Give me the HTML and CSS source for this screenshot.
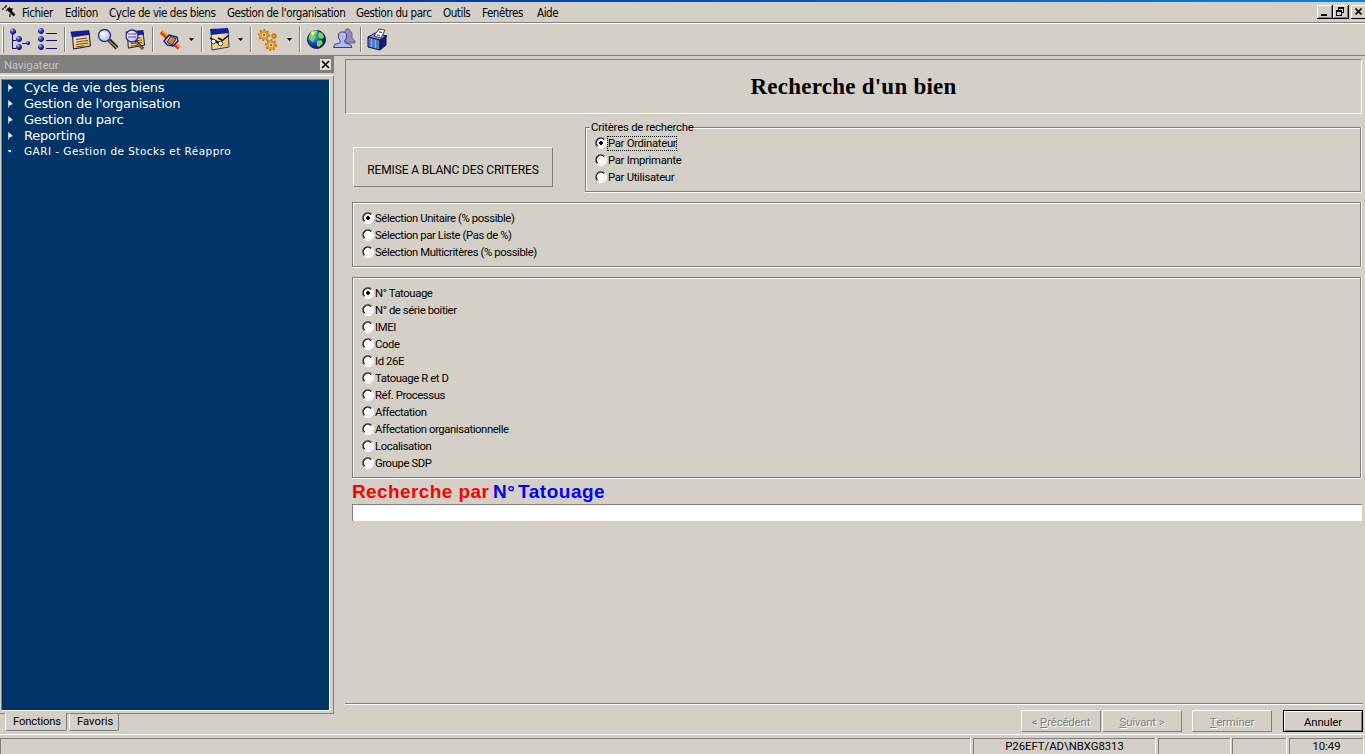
FILE: index.html
```html
<!DOCTYPE html>
<html lang="fr">
<head>
<meta charset="utf-8">
<title>Recherche d'un bien</title>
<link rel="stylesheet" href="styles.css">
</head>
<body>
<svg class="defs" width="0" height="0">
  <defs>
    <radialGradient id="ball" cx="35%" cy="30%" r="75%"><stop offset="0" stop-color="#c8d0ff"/><stop offset=".35" stop-color="#4850c8"/><stop offset="1" stop-color="#000070"/></radialGradient>
    <radialGradient id="sea" cx="35%" cy="35%" r="70%"><stop offset="0" stop-color="#70b8f0"/><stop offset=".5" stop-color="#1858b0"/><stop offset="1" stop-color="#001850"/></radialGradient>
    <radialGradient id="lens" cx="35%" cy="35%" r="75%"><stop offset="0" stop-color="#fff"/><stop offset="1" stop-color="#a8b4f4"/></radialGradient>
    <linearGradient id="paper" x2="1" y2="1"><stop offset="0" stop-color="#fff0c0"/><stop offset="1" stop-color="#e8b858"/></linearGradient>
    <symbol id="node" viewBox="0 0 6 6"><path d="M2 0h2l2 2v2L4 6H2L0 4V2z" fill="url(#ball)"/></symbol>
    <symbol id="radio" viewBox="0 0 12 12">
      <circle cx="6" cy="6" r="5" fill="#fff"/>
      <path d="M2 10A5.500 5.500 0 0 1 10 2" fill="none" stroke="#808080"/>
      <path d="M2.600 9A4.400 4.400 0 0 1 9 2.600" fill="none" stroke="#000" stroke-width="1.100"/>
      <path d="M10 2A5.500 5.500 0 0 1 2 10" fill="none" stroke="#fff"/>
      <path d="M9.400 3.200A4.500 4.500 0 0 1 3.200 9.400" fill="none" stroke="#e4e0da" stroke-width=".7"/>
    </symbol>
    <symbol id="radio-on" viewBox="0 0 12 12"><use href="#radio"/><path d="M5 4h2v1h1v2H7v1H5V7H4V5h1z"/></symbol>
    <symbol id="arr" viewBox="0 0 6 9"><path d="M0 0L5 4.500L0 9z" fill="#fff"/><path d="M1.500 6L5 4.500L0 9z" fill="#0808d0"/></symbol>
    <symbol id="sheet" viewBox="0 0 22 22">
      <path d="M2.500 5L19 3.500L20.500 17L3.500 20z" fill="url(#paper)" stroke="#101048"/>
      <path d="M1 3L19 1.500V5.500L2 8z" fill="#1020a8" stroke="#000060" stroke-width=".6"/>
      <path d="M6 10.500l11-1.500M6 13l12-1.500M6 15.500l12-1.500M6 18l8-1.200" stroke="#504030" stroke-width=".9"/>
    </symbol>
  </defs>
</svg>
<div class="app">
  <div class="titlestrip"></div>
  <div class="menubar">
    <svg class="wand" width="16" height="14"><path d="M3 2l2 1M1 4h2M5 5l1 1M4 1h2" stroke="#222" stroke-width="1.300" fill="none"/><path d="M6.500 3.500l7 7" stroke="#000" stroke-width="2.600"/><path d="M8 2.500l3 3M9 9v3M11 3v2" stroke="#000" stroke-width="1.200"/></svg>
    <span class="mi w1">Fichier</span><span class="mi w2">Edition</span><span class="mi w3">Cycle de vie des biens</span><span class="mi w4">Gestion de l'organisation</span><span class="mi w5">Gestion du parc</span><span class="mi w6">Outils</span><span class="mi w7">Fenêtres</span><span class="mi">Aide</span>
    <div class="winbtns">
      <svg width="16" height="14"><path d="M0 0h16v14H0z" fill="#000"/><path d="M0 0h15v13H0z" fill="#fff"/><path d="M1 1h14v12H1z" fill="#808080"/><path d="M1 1h13v11H1z" fill="#d4d0c8"/><path d="M4 9h6v2H4z"/></svg><svg width="16" height="14"><path d="M0 0h16v14H0z" fill="#000"/><path d="M0 0h15v13H0z" fill="#fff"/><path d="M1 1h14v12H1z" fill="#808080"/><path d="M1 1h13v11H1z" fill="#d4d0c8"/><path d="M5 2h6v6H9V7h1V4H6v1H5zM3 5h6v6H3zM4 7v3h4V7z" fill-rule="evenodd"/></svg><svg class="x" width="16" height="14"><path d="M0 0h16v14H0z" fill="#000"/><path d="M0 0h15v13H0z" fill="#fff"/><path d="M1 1h13v12H1z" fill="#d4d0c8"/><path d="M4.500 3.500l6 6m0-6l-6 6" stroke="#000" stroke-width="1.700"/></svg>
    </div>
  </div>
  <div class="toolbar">
    <svg width="400" height="31">
      <path d="M3.500 2v27M64.500 3v25M152.500 3v25M201.500 3v25M250.500 3v25M299.500 3v25M360.500 3v25" stroke="#808080"/>
      <path d="M2.500 2v27M65.500 3v25M153.500 3v25M202.500 3v25M251.500 3v25M300.500 3v25M361.500 3v25" stroke="#fff"/>
      <path d="M12.500 10v15M12.500 16.500h4M12.500 24.500h4M22 19.500h5M46 9.500h11M46 16.500h11M46 24.500h11" stroke="#101070"/>
      <use href="#node" x="10" y="4" width="6" height="7"/><use href="#node" x="16" y="12" width="6" height="6"/><use href="#node" x="16" y="20" width="6" height="6"/><use href="#node" x="26" y="17" width="4" height="4"/>
      <use href="#node" x="38" y="4" width="6" height="6"/><use href="#node" x="38" y="12" width="6" height="6"/><use href="#node" x="38" y="20" width="6" height="6"/>
      <use href="#sheet" x="70" y="5" width="22" height="22"/>
      <path d="M109 16l8 8" stroke="#30241c" stroke-width="4"/><path d="M109 17l8 7" stroke="#b08040" stroke-width="1.500"/><circle cx="104.500" cy="11.500" r="6" fill="url(#lens)" stroke="#303090" stroke-width="1.400"/>
      <use href="#sheet" x="125" y="5" width="21" height="21"/>
      <path d="M135 16l8 9" stroke="#30241c" stroke-width="3"/><path d="M136 18l7 7" stroke="#b08040" stroke-width="1.300"/><circle cx="132" cy="12" r="6" fill="url(#lens)" stroke="#303090" stroke-width="1.300"/><path d="M128 10h8M128 13h8" stroke="#484890"/>
      <path d="M161 8l18 16" stroke="#f03010" stroke-width="4"/><path d="M162 7l18 16" stroke="#ff9c10" stroke-width="2"/><path d="M164 17l5-6 8 2 1 4-5 5-6-1z" fill="#d4d0e0" stroke="#101078" stroke-width="1.300"/><path d="M167 18l4-6 5 3-4 6z" fill="#d08830" stroke="#302068"/>
      <path d="M189 14h5l-2.500 3zM238 14h5l-2.500 3zM287 14h5l-2.500 3z"/>
      <path d="M211 8l17-2 1 17-17 3z" fill="url(#paper)" stroke="#403868"/><path d="M210 5l18-1 1 5-18 2z" fill="#1020a8"/><path d="M210 14l4 2 6 3 3-3 6-5M216 18l3 1M222 16l-4-2" fill="none" stroke="#101018" stroke-width="1.400"/><circle cx="213.500" cy="17.500" r="2.300" fill="#e8f4ff" stroke="#111" stroke-width=".7"/><circle cx="220.500" cy="19.500" r="2.300" fill="#e8f4ff" stroke="#111" stroke-width=".7"/>
      <g fill="none" stroke="#d07800"><g stroke-width="2"><circle cx="264" cy="11" r="3.600"/><circle cx="271" cy="21" r="3.600"/><circle cx="274" cy="12" r="1.700"/></g><g stroke-width="1.800" stroke-dasharray="2 1.900"><circle cx="264" cy="11" r="5.200"/><circle cx="271" cy="21" r="5.200"/></g></g><g fill="none" stroke="#f8a820" stroke-width=".9"><circle cx="264" cy="11" r="3.600"/><circle cx="271" cy="21" r="3.600"/></g><path d="M263 10h2v2h-2zM270 20h2v2h-2z" fill="#c06800"/>
      <circle cx="316.500" cy="15.500" r="9" fill="url(#sea)" stroke="#102050"/><path d="M309 12l2-4 4-2 3 1-1 3-3 1 1 3-2 4-2-1-2-2zM319 8l3 1 2 4-2 2-3-1-1-3zM317 17l4-1 2 3-4 4-2-1z" fill="#78d850"/><path d="M311 8l3-1 1 2-3 3z" fill="#d8f8a0"/>
      <g stroke="#404080"><path d="M344 18v-8l2-5h3l3 4v5l3 3v2h-8z" fill="#8c8cb4" stroke="#686890"/><path d="M333.500 23.500l1-3 5-1.500 1-2-2-3v-4l2-2h4l2 2v4l-2 3 1 2 5 1.500 1.500 3z" fill="#b0b8f0"/></g>
      <path d="M368 13l7-4 12 3-6 5z" fill="#8098e0" stroke="#081048"/><path d="M368 13l12 3v10l-12-3z" fill="#5078c8" stroke="#081048"/><path d="M380 16l6-4v9l-6 5z" fill="#102070" stroke="#081048"/><path d="M374 12l5-7 6 1-4 8z" fill="#fff" stroke="#222" stroke-width=".8"/><path d="M379 8l3 .5M377 11l3 .5" stroke="#333"/><path d="M371.500 15v8M375.500 16v8" stroke="#90b0e8"/>
    </svg>
  </div>
  <div class="middle">
    <div class="left">
      <div class="navtitle"><span>Navigateur</span><svg width="11" height="11"><path d="M0 0h11v11H0z" fill="#e4e0d8"/><path d="M2 2l7 7M9 2l-7 7" stroke="#000" stroke-width="1.700"/></svg></div>
      <div class="navframe">
        <div class="tree">
          <div class="node"><svg width="6" height="8"><use href="#arr"/></svg><span>Cycle de vie des biens</span></div>
          <div class="node"><svg width="6" height="8"><use href="#arr"/></svg><span>Gestion de l'organisation</span></div>
          <div class="node"><svg width="6" height="8"><use href="#arr"/></svg><span>Gestion du parc</span></div>
          <div class="node"><svg width="6" height="8"><use href="#arr"/></svg><span>Reporting</span></div>
          <div class="node small"><svg width="6" height="8"><circle cx="2.500" cy="4" r="2.300" fill="#0830d0"/><path d="M0 2h3v2H1z" fill="#fff"/></svg><span>GARI - Gestion de Stocks et Réappro</span></div>
        </div>
      </div>
      <div class="tabs"><div class="tab t1">Fonctions</div><div class="tab t2">Favoris</div></div>
    </div>
    <main>
      <h1>Recherche d'un bien</h1>
      <div class="row">
        <div class="btn reset">REMISE A BLANC DES CRITERES</div>
        <div class="group crit"><div class="legend">Critères de recherche</div>
          <label><svg><use href="#radio-on"/></svg><span class="focus">Par Ordinateur</span></label>
          <label><svg><use href="#radio"/></svg><span>Par Imprimante</span></label>
          <label><svg><use href="#radio"/></svg><span>Par Utilisateur</span></label>
        </div>
      </div>
      <div class="group g2">
        <label><svg><use href="#radio-on"/></svg><span>Sélection Unitaire (% possible)</span></label>
        <label><svg><use href="#radio"/></svg><span>Sélection par Liste (Pas de %)</span></label>
        <label><svg><use href="#radio"/></svg><span>Sélection Multicritères (% possible)</span></label>
      </div>
      <div class="group g3">
        <label><svg><use href="#radio-on"/></svg><span>N° Tatouage</span></label>
        <label><svg><use href="#radio"/></svg><span>N° de série boitier</span></label>
        <label><svg><use href="#radio"/></svg><span>IMEI</span></label>
        <label><svg><use href="#radio"/></svg><span>Code</span></label>
        <label><svg><use href="#radio"/></svg><span>Id 26E</span></label>
        <label><svg><use href="#radio"/></svg><span>Tatouage R et D</span></label>
        <label><svg><use href="#radio"/></svg><span>Réf. Processus</span></label>
        <label><svg><use href="#radio"/></svg><span>Affectation</span></label>
        <label><svg><use href="#radio"/></svg><span>Affectation organisationnelle</span></label>
        <label><svg><use href="#radio"/></svg><span>Localisation</span></label>
        <label><svg><use href="#radio"/></svg><span>Groupe SDP</span></label>
      </div>
      <div class="by"><span class="red">Recherche par</span><span class="blue">N° Tatouage</span></div>
      <div class="field"></div>
      <div class="wizard">
        <div class="btn off">&lt; <u>P</u>récédent</div><div class="btn off b2"><u>S</u>uivant &gt;</div><div class="btn off b3"><u>T</u>erminer</div><div class="btn cancel">Annuler</div>
      </div>
    </main>
  </div>
  <div class="status"><div class="c1"></div><div class="c2">P26EFT/AD\NBXG8313</div><div class="c3"></div><div class="c4"></div><div class="c5">10:49</div></div>
</div>
</body>
</html>
```

FILE: styles.css
```css
* { box-sizing: border-box; }
body { margin: 0; background: #d4d0c8; color: #000; font: 11.3px/13px Roboto, "Liberation Sans", Arial, sans-serif; letter-spacing: -0.4px; overflow: hidden; }
.defs { position: absolute; }
svg { display: block; flex: none; }
.app { width: 1365px; height: 754px; display: flex; flex-direction: column; white-space: nowrap; }
.titlestrip { height: 2px; background: linear-gradient(90deg, #001888, #1084d0); }
.menubar { height: 21px; display: flex; align-items: center; border-bottom: 1px solid #808080; font: 11.5px/18px "DejaVu Sans Condensed", "Noto Sans", sans-serif; letter-spacing: -0.43px; }
.mi { padding-top: 1px; }
.wand { margin: 0 5px 0 1px; }
.w1 { width: 43px; }
.w2 { width: 44px; }
.w3 { width: 118px; }
.w4 { width: 129px; }
.w5 { width: 87px; }
.w6 { width: 39px; }
.w7 { width: 55px; }
.winbtns { margin-left: auto; display: flex; width: 48px; overflow: hidden; }
.winbtns .x { margin-left: 2px; }
.toolbar { height: 33px; border-top: 1px solid #fff; border-bottom: 1px solid #808080; }
.middle { height: 679px; display: flex; border-bottom: 1px solid #fff; }
.left { width: 334px; }
.navtitle { height: 17px; background: #808080; color: #c0c0c0; display: flex; align-items: center; justify-content: space-between; padding: 1px 3px 0 4px; letter-spacing: 0; }
.navtitle svg { margin-top: -1px; }
.navframe { margin-top: 2px; height: 639px; border-top: 1px solid #fff; border-right: 1px solid #808080; border-bottom: 1px solid #808080; padding: 3px 3px 3px 1px; }
.tree { height: 632px; background: #003366; border: 1px solid #fff; border-top-color: #808080; border-left-color: #808080; color: #fff; font: 13px/16px "DejaVu Sans", sans-serif; }
.node { height: 16px; display: flex; align-items: center; gap: 10px; padding-left: 6px; letter-spacing: -0.24px; }
.small { font-size: 10.5px; line-height: 14px; letter-spacing: .45px; }
.small span { margin-bottom: 2px; }
.tabs { display: flex; margin-top: -1px; padding-left: 5px; gap: 2px; letter-spacing: 0; }
.tab { height: 18px; border: 1px solid #808080; border-width: 0 1px 1px 0; border-left: 1px solid #fff; background: #d4d0c8; border-radius: 0 0 2px 2px; padding: 2px 0 0 7px; }
.t1 { width: 62px; letter-spacing: -.2px; }
.t2 { width: 50px; border-top: 1px solid #808080; padding-top: 1px; }
main { width: 1017px; margin: 3px 3px 0 11px; display: flex; flex-direction: column; }
h1 { margin: 0; height: 55px; border: 1px solid #808080; border-right-color: #fff; border-bottom-color: #fff; text-align: center; font: bold 23px/53px "Liberation Serif", serif; letter-spacing: .25px; }
.row { height: 79px; margin-top: 9px; display: flex; padding-left: 8px; align-items: flex-start; }
.btn { display: flex; align-items: center; justify-content: center; border: 1px solid #808080; border-top-color: #fff; border-left-color: #fff; }
.reset { margin-top: 24px; width: 200px; height: 40px; padding-top: 6px; font-size: 12px; letter-spacing: -.15px; }
.group { border: 1px solid #808080; box-shadow: inset 1px 1px #fff, 0 1px #fff, 1px 0 #fff; }
.crit { margin: 4px 0 0 32px; width: 776px; height: 65px; padding: 0 0 0 9px; }
.legend { width: 103px; height: 13px; margin: -7px 0 1px -5px; padding-left: 1px; background: #d4d0c8; position: relative; letter-spacing: -.2px; }
label { height: 17px; display: flex; align-items: center; gap: 1px; }
label svg { width: 12px; height: 12px; margin-bottom: 1px; }
.focus { outline: 1px dotted #000; outline-offset: 0; }
.crit label { letter-spacing: -.3px; }
.g2 { margin: 0 1px 0 7px; height: 65px; padding: 7px 0 0 9px; }
.g3 { margin: 10px 1px 0 7px; height: 201px; padding: 7px 0 0 9px; }
.by { margin: 2px 0 0 7px; height: 24px; font: bold 19px/24px "Liberation Sans", Arial, sans-serif; letter-spacing: .4px; display: flex; }
.red { color: #f00; width: 141px; }
.blue { color: #00f; letter-spacing: .5px; word-spacing: -3px; }
.field { margin: 0 0 0 7px; height: 17px; background: #fff; border: 1px solid #808080; border-width: 1px 0 0 1px; }
.wizard { margin: auto -1px 0 0; height: 31px; border-top: 1px solid #808080; box-shadow: inset 0 1px #fff; display: flex; justify-content: flex-end; padding-top: 6px; }
.wizard .btn { width: 80px; height: 22px; margin-bottom: 2px; padding-top: 2px; white-space: pre; letter-spacing: -.1px; }
.wizard .b2 { margin-left: 1px; }
.wizard .b3 { margin-left: 10px; }
.off { color: #808080; text-shadow: 1px 1px #fff; }
.wizard .cancel { margin-left: 11px; border: 1px solid #000; box-shadow: inset 1px 1px #fff, inset -1px -1px #808080; }
.status { height: 19px; padding-top: 3px; display: flex; letter-spacing: 0; }
.status div { border: 1px solid #808080; border-width: 1px 0 0 1px; box-shadow: 1px 0 #fff; text-align: center; height: 16px; line-height: 15px; }
.status .c1 { width: 970px; }
.status .c2 { width: 182px; margin-left: 3px; }
.status .c3 { width: 72px; margin-left: 3px; }
.status .c4 { width: 54px; margin-left: 2px; }
.status .c5 { width: 74px; margin-left: 3px; }
```
